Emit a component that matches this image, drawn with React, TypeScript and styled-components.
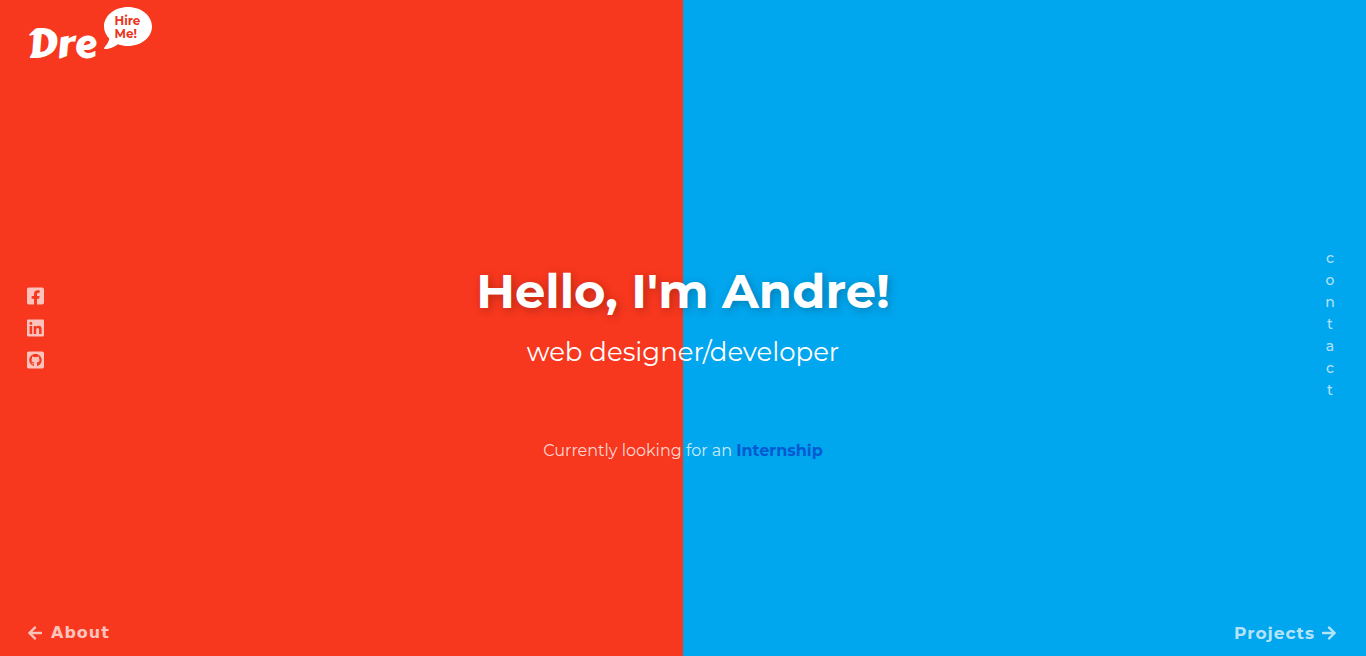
import React from "react";
import styled, { createGlobalStyle } from "styled-components";
import {
  FaArrowLeft,
  FaArrowRight,
  FaComment,
  FaFacebookSquare,
  FaGithubSquare,
  FaLinkedin,
} from "react-icons/fa";

const GlobalStyle = createGlobalStyle`
  * { box-sizing: border-box; }
  body {
    margin: 0;
    font-family: Montserrat, Inter, sans-serif;
    color: #fff;
  }
  a { color: inherit; text-decoration: none; }
  h1, h2, p { margin: 0; }
`;

const Page = styled.div`
  min-height: 100vh;
  display: grid;
  grid-template-rows: 64px 1fr 64px;
  background: linear-gradient(to right, #f7371e 50%, #00a6ee 50%);
`;

const Header = styled.header`
  display: flex;
  align-items: flex-start;
  gap: 8px;
  padding: 4px 27px 0;
`;

const Logo = styled.a`
  padding-top: 16px;
  font: 400 40px/48px "Carter One", Lato, sans-serif;
`;

const Bubble = styled.a`
  position: relative;
  width: 48px;
  height: 48px;
  font-size: 12px;
  line-height: 13px;
  font-weight: 700;
`;

const BubbleShape = styled(FaComment)`
  display: block;
  width: 48px;
  height: 48px;
`;

const BubbleText = styled.span`
  position: absolute;
  top: 10px;
  left: 10px;
  color: #e8361f;
`;

const Main = styled.main`
  display: grid;
  grid-template-columns: 1fr auto 1fr;
  align-items: center;
`;

const Social = styled.nav`
  display: flex;
  flex-direction: column;
  align-items: flex-start;
  gap: 12px;
  padding-left: 27px;
`;

const SocialLink = styled.a`
  display: block;
  height: 20px;
  opacity: 0.7;
  svg { display: block; width: 17px; height: 20px; }
`;

const Hero = styled.section`
  padding-top: 68px;
  text-align: center;
`;

const Title = styled.h1`
  font-size: 48px;
  line-height: 56px;
  font-weight: 700;
  text-shadow: 2px 2px 8px rgba(0, 0, 0, 0.25);
`;

const Subtitle = styled.h2`
  margin-top: 17px;
  font-size: 26px;
  line-height: 32px;
  font-weight: 400;
`;

const Status = styled.p`
  margin-top: 73px;
  font-size: 16px;
  line-height: 20px;
  font-weight: 400;
  color: rgba(255, 255, 255, 0.8);
`;

const StatusLink = styled.a`
  font-weight: 700;
  color: #0359d2;
`;

const Contact = styled.a`
  justify-self: end;
  display: flex;
  flex-direction: column;
  align-items: center;
  width: 12px;
  margin-right: 30px;
  padding-bottom: 8px;
  font-size: 14px;
  line-height: 22px;
  font-weight: 500;
  color: rgba(255, 255, 255, 0.7);
`;

const Footer = styled.footer`
  display: flex;
  justify-content: space-between;
  align-items: flex-end;
  padding: 0 29px 12px 27px;
`;

const PageLink = styled.a<{ $system?: boolean }>`
  display: flex;
  align-items: center;
  gap: ${(p) => (p.$system ? "8px" : "6px")};
  font-family: ${(p) => (p.$system ? '"DejaVu Sans", sans-serif' : "inherit")};
  font-size: ${(p) => (p.$system ? "16px" : "17px")};
  line-height: 22px;
  font-weight: 700;
  letter-spacing: 1px;
  opacity: 0.7;
  svg { width: 16px; height: 16px; }
`;

export default function App() {
  return (
    <>
      <GlobalStyle />
      <Page>
        <Header>
          <Logo href="#home">Dre</Logo>
          <Bubble href="#hire">
            <BubbleShape />
            <BubbleText>Hire<br />Me!</BubbleText>
          </Bubble>
        </Header>
        <Main>
          <Social>
            <SocialLink href="#facebook" aria-label="Facebook"><FaFacebookSquare /></SocialLink>
            <SocialLink href="#linkedin" aria-label="LinkedIn"><FaLinkedin /></SocialLink>
            <SocialLink href="#github" aria-label="GitHub"><FaGithubSquare /></SocialLink>
          </Social>
          <Hero>
            <Title>Hello, I'm Andre!</Title>
            <Subtitle>web designer/developer</Subtitle>
            <Status>
              Currently looking for an <StatusLink href="#internship">Internship</StatusLink>
            </Status>
          </Hero>
          <Contact href="#contact" aria-label="contact">
            {[..."contact"].map((letter, i) => <span key={i}>{letter}</span>)}
          </Contact>
        </Main>
        <Footer>
          <PageLink href="#about" $system>
            <FaArrowLeft />About
          </PageLink>
          <PageLink href="#projects">
            Projects<FaArrowRight />
          </PageLink>
        </Footer>
      </Page>
    </>
  );
}
